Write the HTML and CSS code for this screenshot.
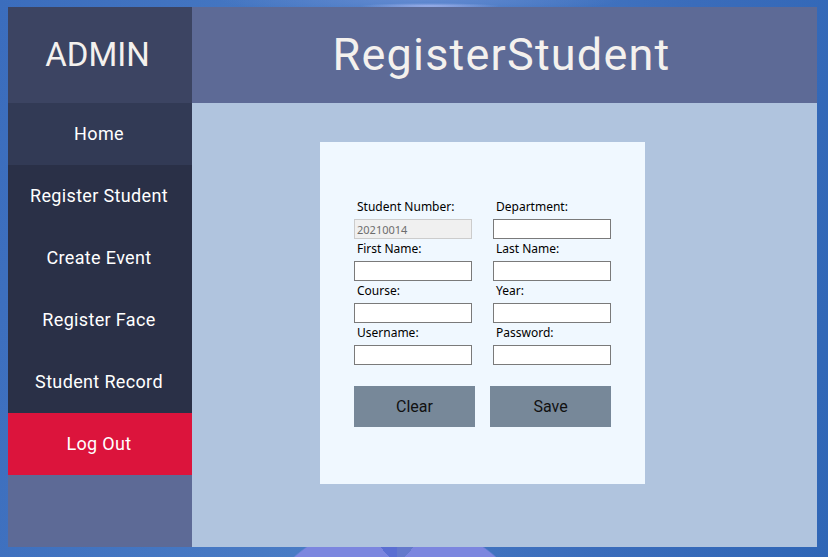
FILE: index.html
```html
<!DOCTYPE html>
<html lang="en">
<head>
<meta charset="utf-8">
<title>RegisterStudent</title>
<link rel="stylesheet" href="styles.css">
</head>
<body>
<div class="desktop">
  <div class="window">
    <aside class="sidebar">
      <div class="brand">ADMIN</div>
      <nav class="nav">
        <a class="nav-item nav-home">Home</a>
        <a class="nav-item">Register Student</a>
        <a class="nav-item">Create Event</a>
        <a class="nav-item">Register Face</a>
        <a class="nav-item">Student Record</a>
        <a class="nav-item nav-logout">Log Out</a>
      </nav>
      <div class="sidebar-fill"></div>
    </aside>
    <main class="main">
      <header class="main-header"><h1 class="title">RegisterStudent</h1></header>
      <section class="content">
        <form class="card">
          <div class="fields">
            <div class="field"><label class="label">Student Number:</label><input class="input input-disabled" value="20210014" disabled></div>
            <div class="field"><label class="label">Department:</label><input class="input"></div>
            <div class="field"><label class="label">First Name:</label><input class="input"></div>
            <div class="field"><label class="label">Last Name:</label><input class="input"></div>
            <div class="field"><label class="label">Course:</label><input class="input"></div>
            <div class="field"><label class="label">Year:</label><input class="input"></div>
            <div class="field"><label class="label">Username:</label><input class="input"></div>
            <div class="field"><label class="label">Password:</label><input class="input" type="password"></div>
          </div>
          <div class="actions">
            <button type="button" class="btn">Clear</button>
            <button type="button" class="btn">Save</button>
          </div>
        </form>
      </section>
    </main>
  </div>
</div>
</body>
</html>
```

FILE: styles.css
```css
html, body {
  margin: 0;
  padding: 0;
}

.desktop {
  width: 828px;
  height: 557px;
  box-sizing: border-box;
  padding: 7px 0 0 8px;
  overflow: hidden;
  background:
    conic-gradient(from -43deg at 30px 18px, #5b6fd2 0deg 43deg, #6479cc 43deg 86deg, rgba(0,0,0,0) 86deg) 367px 547px / 60px 10px no-repeat,
    radial-gradient(circle 153px at 395px 671px, #7c86df 99%, rgba(124,134,223,0) 100%),
    radial-gradient(ellipse 70px 3px at 430px 6px, #9db0ea 0%, rgba(157,176,234,0) 100%),
    radial-gradient(ellipse 200px 14px at 420px 0px, #6289d0 0%, rgba(79,128,200,0) 100%),
    linear-gradient(100deg, #3b6dbd 0%, #4a7cc5 45%, #3a6cbb 75%, #2f66b6 100%);
}

.window {
  width: 809px;
  height: 540px;
  display: grid;
  grid-template-columns: 184px 625px;
}

.sidebar {
  display: flex;
  flex-direction: column;
  font-family: "Roboto", "Noto Sans", sans-serif;
}

.brand {
  height: 96px;
  display: flex;
  align-items: center;
  justify-content: center;
  background: #3c4462;
  color: #f4f1ee;
  font-size: 33px;
  padding: 0 5px 2px 0;
  box-sizing: border-box;
}

.nav {
  display: flex;
  flex-direction: column;
}

.nav-item {
  height: 62px;
  box-sizing: border-box;
  padding: 0 2px 2px 0;
  display: flex;
  align-items: center;
  justify-content: center;
  background: #2a3047;
  color: #ffffff;
  font-size: 18px;
  letter-spacing: 0.35px;
}

.nav-home {
  background: #323a55;
}

.nav-logout {
  background: #dc143c;
}

.sidebar-fill {
  flex: 1;
  background: #5d6a96;
}

.main {
  display: flex;
  flex-direction: column;
}

.main-header {
  height: 96px;
  background: #5d6a96;
  display: flex;
  align-items: center;
  justify-content: center;
  padding-right: 6px;
  box-sizing: border-box;
}

.title {
  margin: 0;
  font-family: "Roboto", "Noto Sans", sans-serif;
  font-weight: 400;
  font-size: 45px;
  letter-spacing: 1.2px;
  color: #f4f1ee;
  padding-bottom: 2px;
}

.content {
  flex: 1;
  background: #b0c4de;
  padding: 39px 0 0 128px;
}

.card {
  width: 325px;
  height: 342px;
  box-sizing: border-box;
  background: #f0f8ff;
  padding: 57px 0 0 34px;
  margin: 0;
}

.fields {
  display: grid;
  grid-template-columns: 118px 118px;
  column-gap: 21px;
  row-gap: 2px;
}

.field {
  display: flex;
  flex-direction: column;
}

.label {
  display: block;
  height: 20px;
  box-sizing: border-box;
  line-height: 16px;
  padding: 0 0 4px 3px;
  font-family: "Noto Sans", "Open Sans", sans-serif;
  font-size: 12px;
  color: #000;
}

.input {
  width: 118px;
  height: 20px;
  box-sizing: border-box;
  border: 1px solid #7a7a7a;
  background: #ffffff;
  margin: 0;
  padding: 0 2px;
  font-family: "Noto Sans", "Liberation Sans", sans-serif;
  font-size: 11px;
  outline: none;
}

.input-disabled {
  background: #f0f0f0;
  border-color: #cccccc;
  color: #6d6d6d;
}

.actions {
  display: flex;
  gap: 15px;
  margin-top: 21px;
}

.btn {
  width: 121px;
  height: 41px;
  border: none;
  background: #778899;
  color: #111;
  font-family: "Roboto", "Noto Sans", sans-serif;
  font-size: 16px;
  padding: 0;
  margin: 0;
}
```
